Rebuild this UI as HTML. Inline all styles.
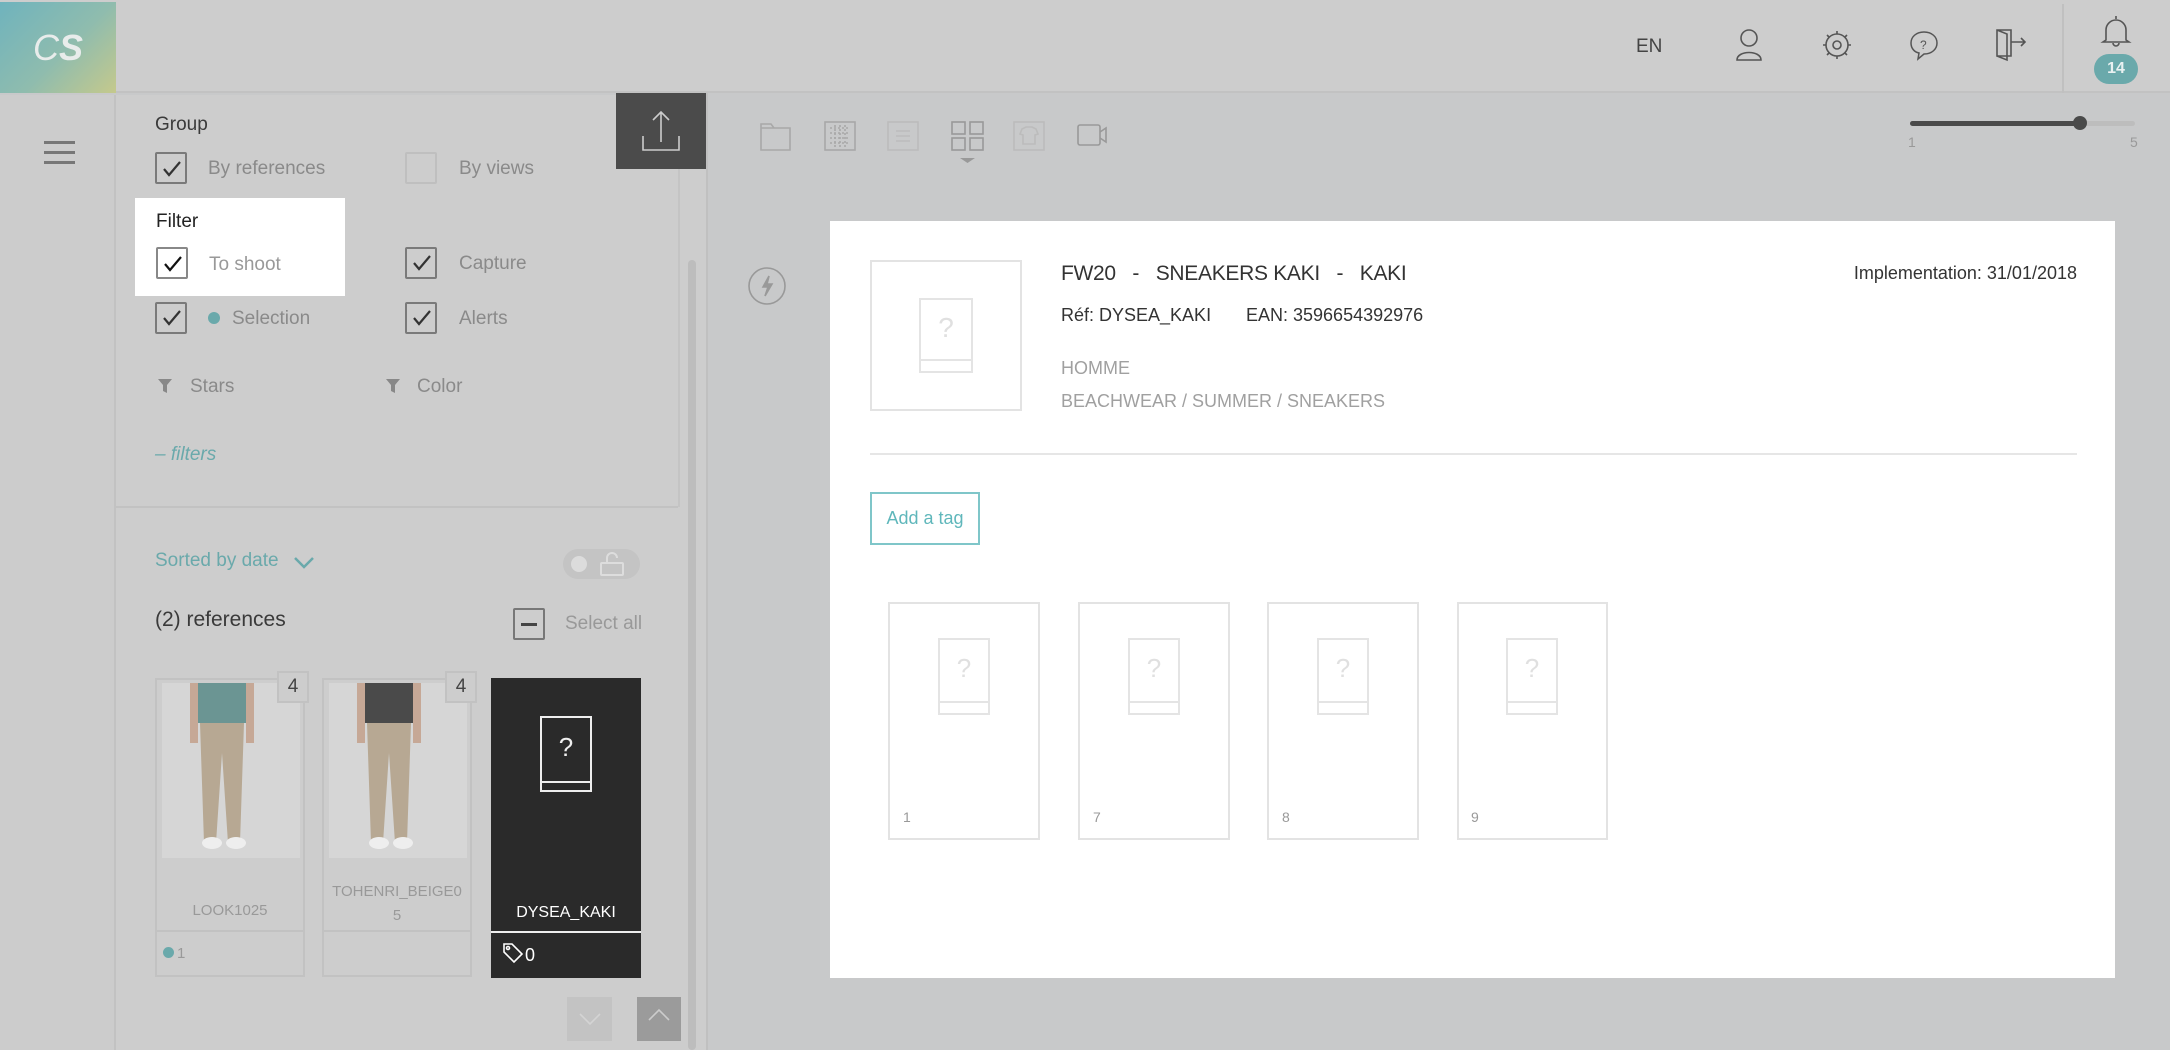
<!DOCTYPE html>
<html><head><meta charset="utf-8"><style>
*{margin:0;padding:0;box-sizing:border-box}
body{width:2170px;height:1050px;overflow:hidden;background:#c8c9ca;font-family:"Liberation Sans",sans-serif;position:relative;color:#3a3a3a}
.a{position:absolute}
.t{position:absolute;white-space:nowrap;line-height:1}
.cb{position:absolute;width:32px;height:32px;border:2px solid #7a7a7a;border-radius:2px}
.ph{position:absolute;border:2px solid #e4e4e4}
.ph:after{content:"";position:absolute;left:0;right:0;bottom:10px;border-top:2px solid #e4e4e4}
</style></head><body>
<!-- header -->
<div class="a" style="left:0;top:0;width:2170px;height:93px;background:#cdcdcd;border-bottom:2px solid #c2c2c2"></div>
<div class="a" style="left:0;top:2px;width:116px;height:91px;background:linear-gradient(135deg,#6fb3bd 0%,#8fbcae 55%,#c5c98c 100%)"></div>
<div class="t" style="left:33px;top:30px;font-size:36px;color:#e8eceb;font-style:italic">C<b>S</b></div>
<div class="t" style="left:1636px;top:37px;font-size:19px;color:#444">EN</div>
<svg class="a" style="left:1733px;top:28px" width="32" height="34" viewBox="0 0 32 34" fill="none" stroke="#555" stroke-width="1.6"><circle cx="16" cy="10" r="8"/><path d="M4 32 C4 22 28 22 28 32 Z"/></svg>
<svg class="a" style="left:1821px;top:29px" width="32" height="32" viewBox="0 0 32 32" fill="none" stroke="#555" stroke-width="1.6"><circle cx="16" cy="16" r="11"/><circle cx="16" cy="16" r="4"/><path d="M16 2v3M16 27v3M2 16h3M27 16h3M6 6l2 2M24 24l2 2M26 6l-2 2M6 26l2-2"/></svg>
<svg class="a" style="left:1908px;top:29px" width="32" height="32" viewBox="0 0 32 32" fill="none" stroke="#555" stroke-width="1.5"><path d="M16 3C8 3 3 8 3 14c0 5 3 9 8 10l-1 6 6-5c8 0 13-5 13-11S24 3 16 3z"/><text x="12" y="20" font-size="12" fill="#555" stroke="none" font-family="Liberation Sans">?</text></svg>
<svg class="a" style="left:1994px;top:28px" width="36" height="34" viewBox="0 0 36 34" fill="none" stroke="#555" stroke-width="1.6"><path d="M3 2h14v26H3zM3 2l10 4v26L3 28M17 14h14M27 10l4 4-4 4"/></svg>
<div class="a" style="left:2062px;top:4px;width:2px;height:89px;background:#c0c0c0"></div>
<svg class="a" style="left:2100px;top:14px" width="32" height="34" viewBox="0 0 32 34" fill="none" stroke="#555" stroke-width="1.6"><path d="M16 2v3M6 26V16a10 10 0 0 1 20 0v10l3 2H3z M13 29a3 3 0 0 0 6 0"/></svg>
<div class="a" style="left:2094px;top:54px;width:44px;height:30px;border-radius:15px;background:#6aa9ab;color:#e9f1f1;font-size:16px;font-weight:bold;text-align:center;line-height:30px">14</div>
<!-- left rail -->
<div class="a" style="left:0;top:95px;width:116px;height:955px;background:#cccccc;border-right:2px solid #c2c2c2"></div>
<div class="a" style="left:44px;top:141px;width:31px;height:3px;background:#777;box-shadow:0 10px 0 #777,0 20px 0 #777"></div>
<!-- sidebar -->
<div class="a" style="left:116px;top:95px;width:590px;height:955px;background:#cdcdcd"></div>
<div class="a" style="left:116px;top:506px;width:562px;height:2px;background:#c2c2c2"></div>
<div class="a" style="left:678px;top:95px;width:2px;height:412px;background:#c4c4c4"></div>
<div class="a" style="left:688px;top:260px;width:8px;height:790px;background:#bdbdbd;border-radius:4px"></div>
<div class="a" style="left:706px;top:93px;width:2px;height:957px;background:#c0c0c0"></div>
<div class="a" style="left:616px;top:93px;width:90px;height:76px;background:#4b4b4b"></div>
<svg class="a" style="left:640px;top:108px" width="42" height="46" viewBox="0 0 42 46" fill="none" stroke="#ccc" stroke-width="1.6"><path d="M21 4v30M13 12l8-8 8 8M3 28v14h36V28"/></svg>
<div class="t" style="left:155px;top:115px;font-size:19px;color:#3a3a3a">Group</div>
<div class="cb" style="left:155px;top:152px"></div><svg class="a" style="left:162px;top:160px" width="20" height="18"><path d="M2 9l5 6L18 2" fill="none" stroke="#333" stroke-width="2.2"/></svg>
<div class="t" style="left:208px;top:159px;font-size:19px;color:#8a8a8a">By references</div>
<div class="cb" style="left:405px;top:152px;border-color:#bfbfbf"></div>
<div class="t" style="left:459px;top:159px;font-size:19px;color:#8a8a8a">By views</div>
<div class="a" style="left:135px;top:198px;width:210px;height:98px;background:#fff"></div>
<div class="t" style="left:156px;top:212px;font-size:19px;color:#222">Filter</div>
<div class="cb" style="left:156px;top:247px;border-color:#888;background:#fff"></div><svg class="a" style="left:163px;top:255px" width="20" height="18"><path d="M2 9l5 6L18 2" fill="none" stroke="#111" stroke-width="2.2"/></svg>
<div class="t" style="left:209px;top:255px;font-size:19px;color:#999">To shoot</div>
<div class="cb" style="left:405px;top:247px"></div><svg class="a" style="left:412px;top:254px" width="20" height="18"><path d="M2 9l5 6L18 2" fill="none" stroke="#333" stroke-width="2.2"/></svg>
<div class="t" style="left:459px;top:254px;font-size:19px;color:#8a8a8a">Capture</div>
<div class="cb" style="left:155px;top:302px"></div><svg class="a" style="left:162px;top:309px" width="20" height="18"><path d="M2 9l5 6L18 2" fill="none" stroke="#333" stroke-width="2.2"/></svg>
<div class="a" style="left:208px;top:312px;width:12px;height:12px;border-radius:6px;background:#6aa9ab"></div>
<div class="t" style="left:232px;top:309px;font-size:19px;color:#8a8a8a">Selection</div>
<div class="cb" style="left:405px;top:302px"></div><svg class="a" style="left:412px;top:309px" width="20" height="18"><path d="M2 9l5 6L18 2" fill="none" stroke="#333" stroke-width="2.2"/></svg>
<div class="t" style="left:459px;top:309px;font-size:19px;color:#8a8a8a">Alerts</div>
<svg class="a" style="left:157px;top:378px" width="16" height="16"><path d="M1 1h14l-5 6v8l-4-2V7z" fill="#888"/></svg>
<div class="t" style="left:190px;top:377px;font-size:19px;color:#8a8a8a">Stars</div>
<svg class="a" style="left:385px;top:378px" width="16" height="16"><path d="M1 1h14l-5 6v8l-4-2V7z" fill="#888"/></svg>
<div class="t" style="left:417px;top:377px;font-size:19px;color:#8a8a8a">Color</div>
<div class="t" style="left:155px;top:445px;font-size:19px;color:#6aa9ab;font-style:italic">– filters</div>
<div class="t" style="left:155px;top:551px;font-size:19px;color:#6aa9ab">Sorted by date</div>
<svg class="a" style="left:292px;top:555px" width="24" height="16"><path d="M3 3l9 9 9-9" fill="none" stroke="#6aa9ab" stroke-width="2.5"/></svg>
<div class="a" style="left:563px;top:549px;width:77px;height:30px;border-radius:15px;background:#c4c4c4"></div>
<div class="a" style="left:571px;top:556px;width:16px;height:16px;border-radius:8px;background:#dcdcdc"></div>
<svg class="a" style="left:598px;top:551px" width="30" height="26" fill="none" stroke="#ddd" stroke-width="2"><rect x="3" y="12" width="22" height="12" rx="1"/><path d="M9 12V7a5 5 0 0 1 10 0"/></svg>
<div class="t" style="left:155px;top:609px;font-size:21px;color:#3a3a3a">(2) references</div>
<div class="cb" style="left:513px;top:608px;border-color:#777"></div><div class="a" style="left:521px;top:623px;width:16px;height:3px;background:#444"></div>
<div class="t" style="left:565px;top:614px;font-size:19px;color:#999">Select all</div>
<!-- cards -->
<div class="a" style="left:155px;top:678px;width:150px;height:299px;border:2px solid #c2c2c2"></div>
<div class="a" style="left:162px;top:683px;width:138px;height:175px;background:#d6d6d6"></div>
<svg class="a" style="left:162px;top:683px" width="138" height="175"><rect x="35" y="0" width="50" height="40" fill="#6b9593"/><path d="M38 40h44l-4 120h-12l-6-90-6 90H42z" fill="#b7a893"/><rect x="28" y="0" width="8" height="60" fill="#c6a896"/><rect x="84" y="0" width="8" height="60" fill="#c6a896"/><ellipse cx="50" cy="160" rx="10" ry="6" fill="#eee"/><ellipse cx="74" cy="160" rx="10" ry="6" fill="#eee"/></svg>
<div class="a" style="left:277px;top:671px;width:32px;height:32px;border:2px solid #c2c2c2;background:#cdcdcd;font-size:19px;color:#444;text-align:center;line-height:28px">4</div>
<div class="t" style="left:155px;top:903px;width:150px;text-align:center;font-size:15px;color:#999">LOOK1025</div>
<div class="a" style="left:155px;top:930px;width:150px;height:2px;background:#c2c2c2"></div>
<div class="a" style="left:163px;top:947px;width:11px;height:11px;border-radius:6px;background:#6aa9ab"></div>
<div class="t" style="left:177px;top:946px;font-size:15px;color:#999">1</div>
<div class="a" style="left:322px;top:678px;width:150px;height:299px;border:2px solid #c2c2c2"></div>
<div class="a" style="left:329px;top:683px;width:138px;height:175px;background:#d6d6d6"></div>
<svg class="a" style="left:329px;top:683px" width="138" height="175"><rect x="35" y="0" width="50" height="40" fill="#4a4a4a"/><path d="M38 40h44l-4 120h-12l-6-90-6 90H42z" fill="#b7a893"/><rect x="28" y="0" width="8" height="60" fill="#c6a896"/><rect x="84" y="0" width="8" height="60" fill="#c6a896"/><ellipse cx="50" cy="160" rx="10" ry="6" fill="#eee"/><ellipse cx="74" cy="160" rx="10" ry="6" fill="#eee"/></svg>
<div class="a" style="left:445px;top:671px;width:32px;height:32px;border:2px solid #c2c2c2;background:#cdcdcd;font-size:19px;color:#444;text-align:center;line-height:28px">4</div>
<div class="t" style="left:322px;top:880px;width:150px;text-align:center;font-size:15px;color:#999;line-height:24px;white-space:normal">TOHENRI_BEIGE0<br>5</div>
<div class="a" style="left:322px;top:930px;width:150px;height:2px;background:#c2c2c2"></div>
<div class="a" style="left:491px;top:678px;width:150px;height:300px;background:#2a2a2a"></div>
<div class="a" style="left:540px;top:716px;width:52px;height:76px;border:2px solid #eee"></div>
<div class="a" style="left:540px;top:781px;width:52px;height:2px;background:#eee"></div>
<div class="t" style="left:540px;top:734px;width:52px;text-align:center;font-size:26px;color:#eee">?</div>
<div class="t" style="left:491px;top:905px;width:150px;text-align:center;font-size:16px;color:#fff">DYSEA_KAKI</div>
<div class="a" style="left:491px;top:931px;width:150px;height:2px;background:#eee"></div>
<svg class="a" style="left:502px;top:942px" width="22" height="22" fill="none" stroke="#fff" stroke-width="1.6"><path d="M2 2h8l10 10-8 8L2 10z"/><circle cx="6" cy="6" r="1.5"/></svg>
<div class="t" style="left:525px;top:946px;font-size:18px;color:#fff">0</div>
<div class="a" style="left:567px;top:997px;width:45px;height:44px;background:#c3c3c3"></div>
<svg class="a" style="left:578px;top:1012px" width="24" height="14"><path d="M2 2l10 10 10-10" fill="none" stroke="#d4d4d4" stroke-width="1.6"/></svg>
<div class="a" style="left:637px;top:997px;width:44px;height:44px;background:#9b9b9b"></div>
<svg class="a" style="left:647px;top:1008px" width="24" height="14"><path d="M2 12l10-10 10 10" fill="none" stroke="#ccc" stroke-width="1.6"/></svg>
<!-- toolbar -->
<svg class="a" style="left:760px;top:120px" width="360" height="46" fill="none" stroke="#a8a8a8" stroke-width="1.6">
<path d="M1 4h10l3 4h16v22H1z M1 8h29"/>
<rect x="65" y="2" width="30" height="28"/><path d="M70 8h20M70 13h20M70 18h20M70 23h20M75 5v22M80 5v22M85 5v22" stroke-dasharray="2 2"/>
<rect x="128" y="2" width="30" height="28" stroke="#bcbcbc"/><path d="M136 11h14M136 16h14M136 21h14" stroke="#bcbcbc"/>
<rect x="192" y="2" width="13" height="12" stroke="#999"/><rect x="210" y="2" width="13" height="12" stroke="#999"/><rect x="192" y="18" width="13" height="12" stroke="#999"/><rect x="210" y="18" width="13" height="12" stroke="#999"/>
<path d="M200 38h15l-7.5 5z" fill="#999" stroke="none"/>
<rect x="254" y="2" width="30" height="28" stroke="#bcbcbc"/><path d="M262 9l4-2h6l4 2 2 5-3 1v9h-12v-9l-3-1z" stroke="#bcbcbc"/>
<rect x="318" y="5" width="22" height="20" rx="2" stroke="#999"/><path d="M340 12l6-4v14l-6-4" stroke="#999"/>
</svg>
<svg class="a" style="left:747px;top:266px" width="40" height="40" fill="none" stroke="#999" stroke-width="1.6"><circle cx="20" cy="20" r="18"/><path d="M22 10l-6 11h5l-3 9 7-12h-5z" fill="#999"/></svg>
<div class="a" style="left:1910px;top:121px;width:225px;height:5px;border-radius:3px;background:#bdbdbd"></div>
<div class="a" style="left:1910px;top:121px;width:170px;height:5px;border-radius:3px;background:#4a4a4a"></div>
<div class="a" style="left:2073px;top:116px;width:14px;height:14px;border-radius:7px;background:#4a4a4a"></div>
<div class="t" style="left:1908px;top:135px;font-size:14px;color:#999">1</div>
<div class="t" style="left:2130px;top:135px;font-size:14px;color:#999">5</div>
<!-- card -->
<div class="a" style="left:830px;top:221px;width:1285px;height:757px;background:#fff"></div>
<div class="a" style="left:870px;top:260px;width:152px;height:151px;border:2px solid #e3e3e3"></div>
<div class="ph" style="left:919px;top:298px;width:54px;height:75px"></div>
<div class="t" style="left:919px;top:314px;width:54px;text-align:center;font-size:28px;color:#e0e0e0">?</div>
<div class="t" style="left:1061px;top:263px;font-size:21px;color:#333;letter-spacing:-0.3px">FW20&nbsp;&nbsp;&nbsp;-&nbsp;&nbsp;&nbsp;SNEAKERS KAKI&nbsp;&nbsp;&nbsp;-&nbsp;&nbsp;&nbsp;KAKI</div>
<div class="t" style="left:1061px;top:306px;font-size:18px;color:#333">Réf: DYSEA_KAKI</div>
<div class="t" style="left:1246px;top:306px;font-size:18px;color:#333">EAN: 3596654392976</div>
<div class="t" style="left:1061px;top:359px;font-size:18px;color:#a0a0a0">HOMME</div>
<div class="t" style="left:1061px;top:392px;font-size:18px;color:#a0a0a0">BEACHWEAR / SUMMER / SNEAKERS</div>
<div class="t" style="left:1700px;top:264px;width:377px;text-align:right;font-size:18px;color:#333">Implementation: 31/01/2018</div>
<div class="a" style="left:870px;top:453px;width:1207px;height:2px;background:#e6e6e6"></div>
<div class="a" style="left:870px;top:492px;width:110px;height:53px;border:2px solid #7fc6c9;color:#5fb7bb;font-size:18px;text-align:center;line-height:49px">Add a tag</div>
<div class="a" style="left:888px;top:602px;width:152px;height:238px;border:2px solid #e3e3e3"></div>
<div class="ph" style="left:938px;top:638px;width:52px;height:77px"></div><div class="t" style="left:938px;top:655px;width:52px;text-align:center;font-size:26px;color:#e0e0e0">?</div><div class="t" style="left:903px;top:810px;font-size:14px;color:#999">1</div>
<div class="a" style="left:1078px;top:602px;width:152px;height:238px;border:2px solid #e3e3e3"></div>
<div class="ph" style="left:1128px;top:638px;width:52px;height:77px"></div><div class="t" style="left:1128px;top:655px;width:52px;text-align:center;font-size:26px;color:#e0e0e0">?</div><div class="t" style="left:1093px;top:810px;font-size:14px;color:#999">7</div>
<div class="a" style="left:1267px;top:602px;width:152px;height:238px;border:2px solid #e3e3e3"></div>
<div class="ph" style="left:1317px;top:638px;width:52px;height:77px"></div><div class="t" style="left:1317px;top:655px;width:52px;text-align:center;font-size:26px;color:#e0e0e0">?</div><div class="t" style="left:1282px;top:810px;font-size:14px;color:#999">8</div>
<div class="a" style="left:1457px;top:602px;width:151px;height:238px;border:2px solid #e3e3e3"></div>
<div class="ph" style="left:1506px;top:638px;width:52px;height:77px"></div><div class="t" style="left:1506px;top:655px;width:52px;text-align:center;font-size:26px;color:#e0e0e0">?</div><div class="t" style="left:1471px;top:810px;font-size:14px;color:#999">9</div>
</body></html>
